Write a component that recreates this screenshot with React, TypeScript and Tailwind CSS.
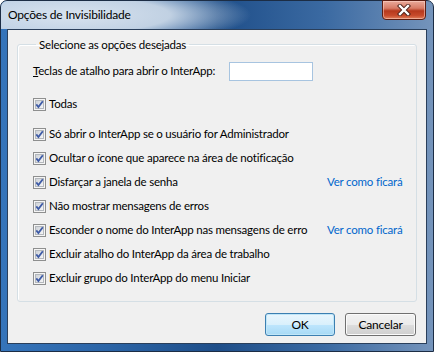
import React from 'react';

const CheckBox = () => (
  <svg width="13" height="13" viewBox="0 0 13 13" className="shrink-0">
    <defs>
      <linearGradient id="cbFill" x1="0" y1="0" x2="1" y2="1">
        <stop offset="0" stopColor="#cbd0d6" />
        <stop offset="1" stopColor="#f8f8f8" />
      </linearGradient>
    </defs>
    <rect x="0.5" y="0.5" width="12" height="12" fill="#f5f5f5" stroke="#8e8f8f" />
    <rect x="2.5" y="2.5" width="8" height="8" fill="url(#cbFill)" stroke="#b4b8bd" />
    <path d="M3.3 6.4 L5.4 9 L9.8 3.2" fill="none" stroke="#3e5ba6" strokeWidth="1.8" />
  </svg>
);

type Opt = { label: string; preview?: boolean };

const OPTIONS: Opt[] = [
  { label: 'Só abrir o InterApp se o usuário for Administrador' },
  { label: 'Ocultar o ícone que aparece na área de notificação' },
  { label: 'Disfarçar a janela de senha', preview: true },
  { label: 'Não mostrar mensagens de erros' },
  { label: 'Esconder o nome do InterApp nas mensagens de erro', preview: true },
  { label: 'Excluir atalho do InterApp da área de trabalho' },
  { label: 'Excluir grupo do InterApp do menu Iniciar' },
];

const OptionRow = ({ opt, first }: { opt: Opt; first?: boolean }) => (
  <div className={`flex items-center h-[24px] ${first ? 'mt-[6px]' : 'mt-0'}`}>
    <div className="flex items-center gap-[3px] w-[294px]">
      <CheckBox />
      <span className="whitespace-nowrap">{opt.label}</span>
    </div>
    {opt.preview && <span className="text-[#0066cc] whitespace-nowrap">Ver como ficará</span>}
  </div>
);

export default function App() {
  return (
    <div className="w-[434px] h-[352px] bg-white font-['Lato',sans-serif] text-[11.5px] tracking-[-0.2px] text-black">
      <div className="w-full h-full flex flex-col rounded-t-[7px] border border-[#1c2d45] bg-[linear-gradient(to_right,#3574ba_0%,#2b64a6_25%,#1e4e89_50%,#3b6aa2_75%,#7594bb_100%)]">
        {/* Title bar */}
        <div className="h-[28px] flex items-start rounded-t-[6px] bg-[radial-gradient(ellipse_180px_32px_at_70px_14px,rgba(222,231,241,0.97)_0%,rgba(210,222,235,0.9)_55%,rgba(180,200,222,0)_100%)]">
          <span className="ml-[7px] mt-[6px] leading-[16px] text-[12px]">Opções de Invisibilidade</span>
          <div className="ml-auto mr-[7px] w-[44px] h-[20px] -mt-[1px] flex items-center justify-center rounded-b-[4px] border border-[#5c1d12] shadow-[inset_0_0_0_1px_rgba(255,220,210,0.5)] bg-[linear-gradient(to_bottom,#e9aa9b_0%,#d77b66_40%,#b6391d_55%,#c74a2b_80%,#e0805c_100%)]">
            <svg width="14" height="12" viewBox="0 0 14 12">
              <path d="M3 2 L11 10 M11 2 L3 10" stroke="#4a2019" strokeWidth="4.2" strokeLinecap="square" />
              <path d="M3 2 L11 10 M11 2 L3 10" stroke="#ffffff" strokeWidth="2.4" strokeLinecap="square" />
            </svg>
          </div>
        </div>

        {/* Client area */}
        <div className="flex-1 mx-[6px] mb-[7px] border border-[#2a3f5b] bg-[#f0f0f0] flex flex-col">
          <fieldset className="mt-[7px] ml-[9px] mr-[9px] border border-[#d5dfe5] rounded-[3px] pl-[15px] pb-[11px] shadow-[inset_1px_1px_0_#ffffff]">
            <legend className="ml-[3px] px-[3px] leading-[15px]">Selecione as opções desejadas</legend>
            <div className="flex items-center h-[20px] mt-[9px]">
              <span className="w-[196px] whitespace-nowrap">
                <span className="underline">T</span>eclas de atalho para abrir o InterApp:
              </span>
              <div className="w-[84px] h-[19px] bg-white border border-[#a7c4e0]" />
            </div>
            <div className="flex items-center h-[24px] mt-[11px] gap-[3px]">
              <CheckBox />
              <span>Todas</span>
            </div>
            {OPTIONS.map((o, i) => (
              <OptionRow key={o.label} opt={o} first={i === 0} />
            ))}
          </fieldset>

          <div className="flex justify-end gap-[10px] mt-[11px] mr-[10px]">
            <button className="w-[70px] h-[23px] rounded-[3px] border border-[#3c7fb1] shadow-[inset_0_0_0_1px_#c0e6f8] bg-[linear-gradient(to_bottom,#eaf6fd_0%,#d9f0fc_50%,#bee6fd_51%,#a7d9f5_100%)] text-[12px] leading-none">
              OK
            </button>
            <button className="w-[71px] h-[23px] rounded-[3px] border border-[#707070] shadow-[inset_0_0_0_1px_#fbfbfb] bg-[linear-gradient(to_bottom,#f2f2f2_0%,#ebebeb_50%,#dddddd_51%,#cfcfcf_100%)] text-[12px] leading-none">
              Cancelar
            </button>
          </div>
        </div>
      </div>
    </div>
  );
}
